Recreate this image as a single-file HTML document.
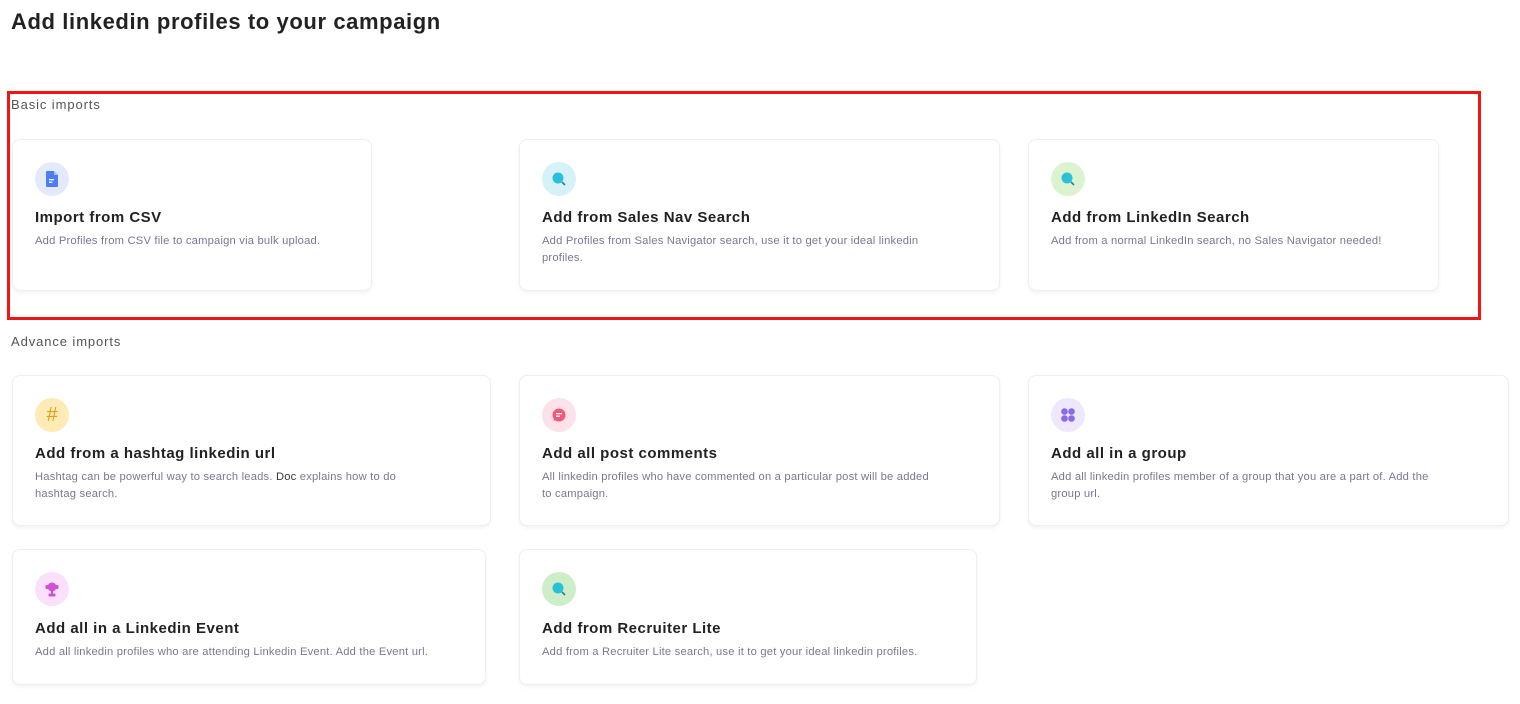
<!DOCTYPE html>
<html><head><style>
body{margin:0;width:1520px;height:704px;background:#fff;font-family:"Liberation Sans",sans-serif;position:relative;overflow:hidden}
h1{position:absolute;left:11px;top:9px;margin:0;font-size:22px;font-weight:600;color:#222;letter-spacing:0.6px}
.lbl{position:absolute;left:11px;font-size:13px;color:#555;letter-spacing:0.9px}
.card{position:absolute;border:1px solid #eeeef3;border-radius:8px;box-shadow:0 2px 4px rgba(0,0,0,0.05);background:#fff}
.ic{position:absolute;left:22px;top:22px;width:34px;height:34px;border-radius:50%;display:flex;align-items:center;justify-content:center}
.t{position:absolute;left:22px;top:69px;font-size:15px;font-weight:600;color:#222;letter-spacing:0.5px}
.d{position:absolute;left:22px;top:93px;font-size:11.2px;line-height:17px;color:#7a7890;right:42px;letter-spacing:0.2px}
.red{position:absolute;left:7px;top:91px;width:1468px;height:223px;border:3px solid #f01414}
</style></head><body>
<h1>Add linkedin profiles to your campaign</h1>
<div class="lbl" style="top:97px">Basic imports</div>
<div class="lbl" style="top:334px">Advance imports</div>

<div class="card" style="left:12px;top:139px;width:358px;height:150px">
<div class="ic" style="background:#e3eafe"><svg width="14" height="16" viewBox="0 0 14 16"><path d="M2 0h7l4 4v11a1 1 0 0 1-1 1H2a1 1 0 0 1-1-1V1a1 1 0 0 1 1-1z" fill="#4d7cf4"/><path d="M9 0v4h4" fill="#a9c0fb"/><rect x="4" y="8" width="5" height="1.3" fill="#fff"/><rect x="4" y="10.6" width="3.5" height="1.3" fill="#fff"/></svg></div>
<div class="t">Import from CSV</div><div class="d" style="right:10px">Add Profiles from CSV file to campaign via bulk upload.</div></div>

<div class="card" style="left:519px;top:139px;width:479px;height:150px">
<div class="ic" style="background:#d6f1f7"><svg width="16" height="16"><circle cx="7" cy="7" r="5.5" fill="#2bc0da"/><path d="M11 11l3 3" stroke="#2a7fa0" stroke-width="1.6"/></svg></div>
<div class="t">Add from Sales Nav Search</div><div class="d">Add Profiles from Sales Navigator search, use it to get your ideal linkedin profiles.</div></div>

<div class="card" style="left:1028px;top:139px;width:409px;height:150px">
<div class="ic" style="background:#dcf3d0"><svg width="16" height="16"><circle cx="7" cy="7" r="5.5" fill="#2bc0da"/><path d="M11 11l3 3" stroke="#2a7fa0" stroke-width="1.6"/></svg></div>
<div class="t">Add from LinkedIn Search</div><div class="d" style="right:10px">Add from a normal LinkedIn search, no Sales Navigator needed!</div></div>

<div class="red"></div>

<div class="card" style="left:12px;top:375px;width:477px;height:149px">
<div class="ic" style="background:#fdeab5;color:#e0a21a;font-size:20px">#</div>
<div class="t">Add from a hashtag linkedin url</div><div class="d" style="right:55px">Hashtag can be powerful way to search leads. <span style="color:#333">Doc</span> explains how to do hashtag search.</div></div>

<div class="card" style="left:519px;top:375px;width:479px;height:149px">
<div class="ic" style="background:#fde2ea"><svg width="16" height="16"><circle cx="8" cy="8" r="6.5" fill="#f2587c"/><path d="M2 14l2-3 2 2z" fill="#f2587c"/><rect x="5" y="6" width="6" height="1.3" fill="#fff"/><rect x="5" y="8.6" width="4" height="1.3" fill="#fff"/></svg></div>
<div class="t">Add all post comments</div><div class="d" style="right:60px">All linkedin profiles who have commented on a particular post will be added to campaign.</div></div>

<div class="card" style="left:1028px;top:375px;width:479px;height:149px">
<div class="ic" style="background:#efe8fd"><svg width="16" height="16"><circle cx="4.5" cy="4.5" r="3.3" fill="#8b6ae8"/><circle cx="11.5" cy="4.5" r="3.3" fill="#8b6ae8"/><circle cx="4.5" cy="11.5" r="3.3" fill="#8b6ae8"/><circle cx="11.5" cy="11.5" r="3.3" fill="#8b6ae8"/></svg></div>
<div class="t">Add all in a group</div><div class="d" style="right:50px">Add all linkedin profiles member of a group that you are a part of. Add the group url.</div></div>

<div class="card" style="left:12px;top:549px;width:472px;height:134px">
<div class="ic" style="background:#fbe0fb"><svg width="16" height="16"><circle cx="8" cy="6" r="4.5" fill="#d24fd8"/><rect x="1.5" y="4" width="3" height="4" rx="1" fill="#d24fd8"/><rect x="11.5" y="4" width="3" height="4" rx="1" fill="#d24fd8"/><rect x="7" y="10" width="2" height="3" fill="#d24fd8"/><rect x="4.5" y="12.5" width="7" height="3" rx="1" fill="#d24fd8"/></svg></div>
<div class="t" style="top:70px">Add all in a Linkedin Event</div><div class="d" style="top:94px;right:10px">Add all linkedin profiles who are attending Linkedin Event. Add the Event url.</div></div>

<div class="card" style="left:519px;top:549px;width:456px;height:134px">
<div class="ic" style="background:#cdeec8"><svg width="16" height="16"><circle cx="7" cy="7" r="5.5" fill="#2bc0da"/><path d="M11 11l3 3" stroke="#2a7fa0" stroke-width="1.6"/></svg></div>
<div class="t" style="top:70px">Add from Recruiter Lite</div><div class="d" style="top:94px;right:10px">Add from a Recruiter Lite search, use it to get your ideal linkedin profiles.</div></div>
</body></html>
